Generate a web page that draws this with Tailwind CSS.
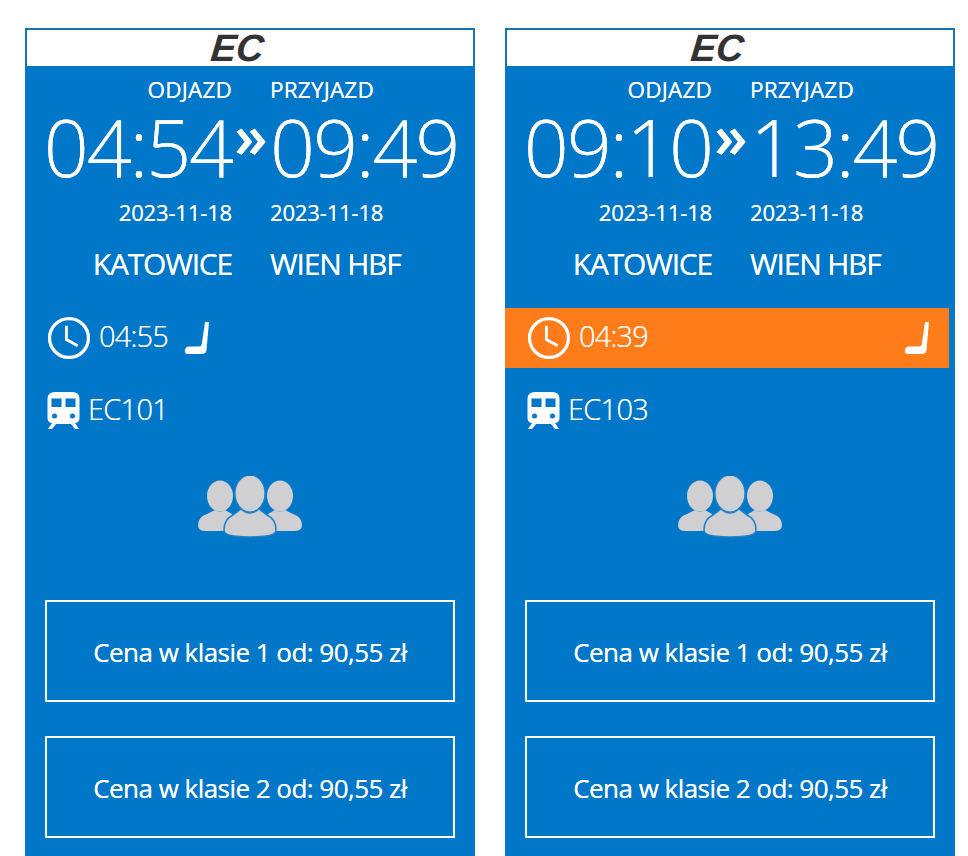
<!DOCTYPE html>
<html>
<head>
<meta charset="utf-8">
<script src="https://cdn.jsdelivr.net/npm/@tailwindcss/browser@4"></script>
</head>
<body class="bg-white overflow-hidden h-[856px] font-['Open_Sans',sans-serif] text-white">
<div class="flex gap-[30px] pl-[25px] pt-[28px]">

<section class="w-[450px] h-[860px] shrink-0 bg-[#0077c8] flex flex-col">
  <div class="h-[38px] bg-white border-2 border-b-0 border-[#0f75b5] flex justify-center items-center pr-[26px]">
    <span class="font-['Liberation_Sans',sans-serif] italic font-bold text-[38px] leading-[34px] text-[#333] -skew-x-6">EC</span>
  </div>
  <div class="grid grid-cols-[207px_38px_205px] mt-[10px] h-[28px] items-center text-[22.5px] leading-[28px] tracking-[0.2px] [text-shadow:0_0_0.4px_#fff]"><div class="text-right">ODJAZD</div><div></div><div>PRZYJAZD</div></div>
  <div class="grid grid-cols-[207px_38px_205px] mt-[7px] h-[72px] items-center font-light text-[79px] leading-[72px] tracking-[-2.2px] [text-shadow:0_0_0.5px_#fff]"><div class="text-right whitespace-nowrap">04:54</div><div class="text-[60px] text-center leading-[60px] -mt-[24px] font-semibold tracking-normal">»</div><div class="whitespace-nowrap">09:49</div></div>
  <div class="grid grid-cols-[207px_38px_205px] mt-[15px] h-[28px] items-center text-[22px] leading-[28px] tracking-[-0.15px] [text-shadow:0_0_0.4px_#fff]"><div class="text-right">2023-11-18</div><div></div><div>2023-11-18</div></div>
  <div class="grid grid-cols-[207px_38px_205px] mt-[21px] h-[34px] items-center text-[30px] leading-[34px] tracking-[-1.2px] [text-shadow:0_0_0.5px_#fff]"><div class="text-right">KATOWICE</div><div></div><div>WIEN HBF</div></div>
  <div class="mt-[27px] h-[60px] flex items-center pl-[22px] pb-[1px]">
    <svg class="w-[44px] h-[44px] shrink-0" viewBox="0 0 43 43" fill="none" stroke="#fff"><circle cx="21.5" cy="21.5" r="19" stroke-width="3.2"/><path d="M19 9.500 V23 L30 29" stroke-width="2.800"/></svg>
    <span class="ml-[8px] text-[29px] font-light tracking-[-0.8px] leading-none -mt-[4px] [text-shadow:0_0_0.4px_#fff]">04:55</span>
    <svg class="ml-[16px] w-[26px] h-[34px] shrink-0" viewBox="0 0 26 34" fill="#fff"><path d="M21 1 L25 1 L22.500 29 Q22 33 18 33 L4 33 Q0 33 1 29 Q1.500 25.500 5 25.500 L15 25.500 Q17.500 25.500 17.800 23 Z"/></svg>
  </div>
  <div class="mt-[14px] h-[56px] flex items-center pl-[22px]">
    <svg class="w-[33px] h-[39px] shrink-0" viewBox="0 0 33 39"><path fill="#fff" d="M8 1 H25 Q32.500 1 32.500 8 V27 Q32.500 31.500 28 32 L32 38 H28 L24 33 H9 L5 38 H1 L5 32 Q0.500 31.500 0.500 27 V8 Q0.500 1 8 1 Z"/><path fill="#0077c8" d="M4.500 7.500 H14.500 V16 H4.500 Z M18.500 7.500 H28.500 V16 H18.500 Z"/><circle cx="7.500" cy="25" r="2.500" fill="#0077c8"/><circle cx="25.500" cy="25" r="2.500" fill="#0077c8"/></svg>
    <span class="ml-[8px] text-[29px] font-light tracking-[-0.7px] leading-none -mt-[4px] [text-shadow:0_0_0.4px_#fff]">EC101</span>
  </div>
  <div class="mt-[38px] flex justify-center">
    <svg class="w-[104px] h-[62px]" viewBox="0 0 104 62" fill="#d0d0d2"><ellipse cx="22" cy="20" rx="13" ry="15.500"/><ellipse cx="82" cy="20" rx="13" ry="15.500"/><path d="M0 49 Q0 41 9 38 L17 34 Q22 37 27 34 L34 38 L32 55 L8 55 Q0 55 0 49 Z"/><path d="M104 49 Q104 41 95 38 L87 34 Q82 37 77 34 L70 38 L72 55 L96 55 Q104 55 104 49 Z"/><ellipse cx="52" cy="17.500" rx="15" ry="18.500" stroke="#1e84c9" stroke-width="1.200"/><path stroke="#1e84c9" stroke-width="1.500" d="M26 54 Q26 43 35 39 L43 33 Q52 41 61 33 L69 39 Q78 43 78 54 Q78 59 68 60 Q52 62 36 60 Q26 59 26 54 Z"/></svg>
  </div>
  <div class="mt-[62px] mx-[20px] h-[102px] pt-[3px] border-2 border-white flex items-center justify-center text-[26px] tracking-[-0.53px] [text-shadow:0_0_0.6px_#fff]">Cena w klasie 1 od: 90,55 zł</div>
  <div class="mt-[34px] mx-[20px] h-[102px] pt-[3px] border-2 border-white flex items-center justify-center text-[26px] tracking-[-0.53px] [text-shadow:0_0_0.6px_#fff]">Cena w klasie 2 od: 90,55 zł</div>
</section>

<section class="w-[450px] h-[860px] shrink-0 bg-[#0077c8] flex flex-col">
  <div class="h-[38px] bg-white border-2 border-b-0 border-[#0f75b5] flex justify-center items-center pr-[26px]">
    <span class="font-['Liberation_Sans',sans-serif] italic font-bold text-[38px] leading-[34px] text-[#333] -skew-x-6">EC</span>
  </div>
  <div class="grid grid-cols-[207px_38px_205px] mt-[10px] h-[28px] items-center text-[22.5px] leading-[28px] tracking-[0.2px] [text-shadow:0_0_0.4px_#fff]"><div class="text-right">ODJAZD</div><div></div><div>PRZYJAZD</div></div>
  <div class="grid grid-cols-[207px_38px_205px] mt-[7px] h-[72px] items-center font-light text-[79px] leading-[72px] tracking-[-2.2px] [text-shadow:0_0_0.5px_#fff]"><div class="text-right whitespace-nowrap">09:10</div><div class="text-[60px] text-center leading-[60px] -mt-[24px] font-semibold tracking-normal">»</div><div class="whitespace-nowrap">13:49</div></div>
  <div class="grid grid-cols-[207px_38px_205px] mt-[15px] h-[28px] items-center text-[22px] leading-[28px] tracking-[-0.15px] [text-shadow:0_0_0.4px_#fff]"><div class="text-right">2023-11-18</div><div></div><div>2023-11-18</div></div>
  <div class="grid grid-cols-[207px_38px_205px] mt-[21px] h-[34px] items-center text-[30px] leading-[34px] tracking-[-1.2px] [text-shadow:0_0_0.5px_#fff]"><div class="text-right">KATOWICE</div><div></div><div>WIEN HBF</div></div>
  <div class="mt-[27px] h-[60px] w-[444px] bg-[#ff7c1b] flex items-center pl-[22px] pr-[19px] pb-[1px]">
    <svg class="w-[44px] h-[44px] shrink-0" viewBox="0 0 43 43" fill="none" stroke="#fff"><circle cx="21.5" cy="21.5" r="19" stroke-width="3.2"/><path d="M19 9.500 V23 L30 29" stroke-width="2.800"/></svg>
    <span class="ml-[8px] text-[29px] font-light tracking-[-0.8px] leading-none -mt-[4px] [text-shadow:0_0_0.4px_#fff]">04:39</span>
    <svg class="ml-auto w-[26px] h-[34px] shrink-0" viewBox="0 0 26 34" fill="#fff"><path d="M21 1 L25 1 L22.500 29 Q22 33 18 33 L4 33 Q0 33 1 29 Q1.500 25.500 5 25.500 L15 25.500 Q17.500 25.500 17.800 23 Z"/></svg>
  </div>
  <div class="mt-[14px] h-[56px] flex items-center pl-[22px]">
    <svg class="w-[33px] h-[39px] shrink-0" viewBox="0 0 33 39"><path fill="#fff" d="M8 1 H25 Q32.500 1 32.500 8 V27 Q32.500 31.500 28 32 L32 38 H28 L24 33 H9 L5 38 H1 L5 32 Q0.500 31.500 0.500 27 V8 Q0.500 1 8 1 Z"/><path fill="#0077c8" d="M4.500 7.500 H14.500 V16 H4.500 Z M18.500 7.500 H28.500 V16 H18.500 Z"/><circle cx="7.500" cy="25" r="2.500" fill="#0077c8"/><circle cx="25.500" cy="25" r="2.500" fill="#0077c8"/></svg>
    <span class="ml-[8px] text-[29px] font-light tracking-[-0.7px] leading-none -mt-[4px] [text-shadow:0_0_0.4px_#fff]">EC103</span>
  </div>
  <div class="mt-[38px] flex justify-center">
    <svg class="w-[104px] h-[62px]" viewBox="0 0 104 62" fill="#d0d0d2"><ellipse cx="22" cy="20" rx="13" ry="15.500"/><ellipse cx="82" cy="20" rx="13" ry="15.500"/><path d="M0 49 Q0 41 9 38 L17 34 Q22 37 27 34 L34 38 L32 55 L8 55 Q0 55 0 49 Z"/><path d="M104 49 Q104 41 95 38 L87 34 Q82 37 77 34 L70 38 L72 55 L96 55 Q104 55 104 49 Z"/><ellipse cx="52" cy="17.500" rx="15" ry="18.500" stroke="#1e84c9" stroke-width="1.200"/><path stroke="#1e84c9" stroke-width="1.500" d="M26 54 Q26 43 35 39 L43 33 Q52 41 61 33 L69 39 Q78 43 78 54 Q78 59 68 60 Q52 62 36 60 Q26 59 26 54 Z"/></svg>
  </div>
  <div class="mt-[62px] mx-[20px] h-[102px] pt-[3px] border-2 border-white flex items-center justify-center text-[26px] tracking-[-0.53px] [text-shadow:0_0_0.6px_#fff]">Cena w klasie 1 od: 90,55 zł</div>
  <div class="mt-[34px] mx-[20px] h-[102px] pt-[3px] border-2 border-white flex items-center justify-center text-[26px] tracking-[-0.53px] [text-shadow:0_0_0.6px_#fff]">Cena w klasie 2 od: 90,55 zł</div>
</section>

</div>
</body>
</html>
